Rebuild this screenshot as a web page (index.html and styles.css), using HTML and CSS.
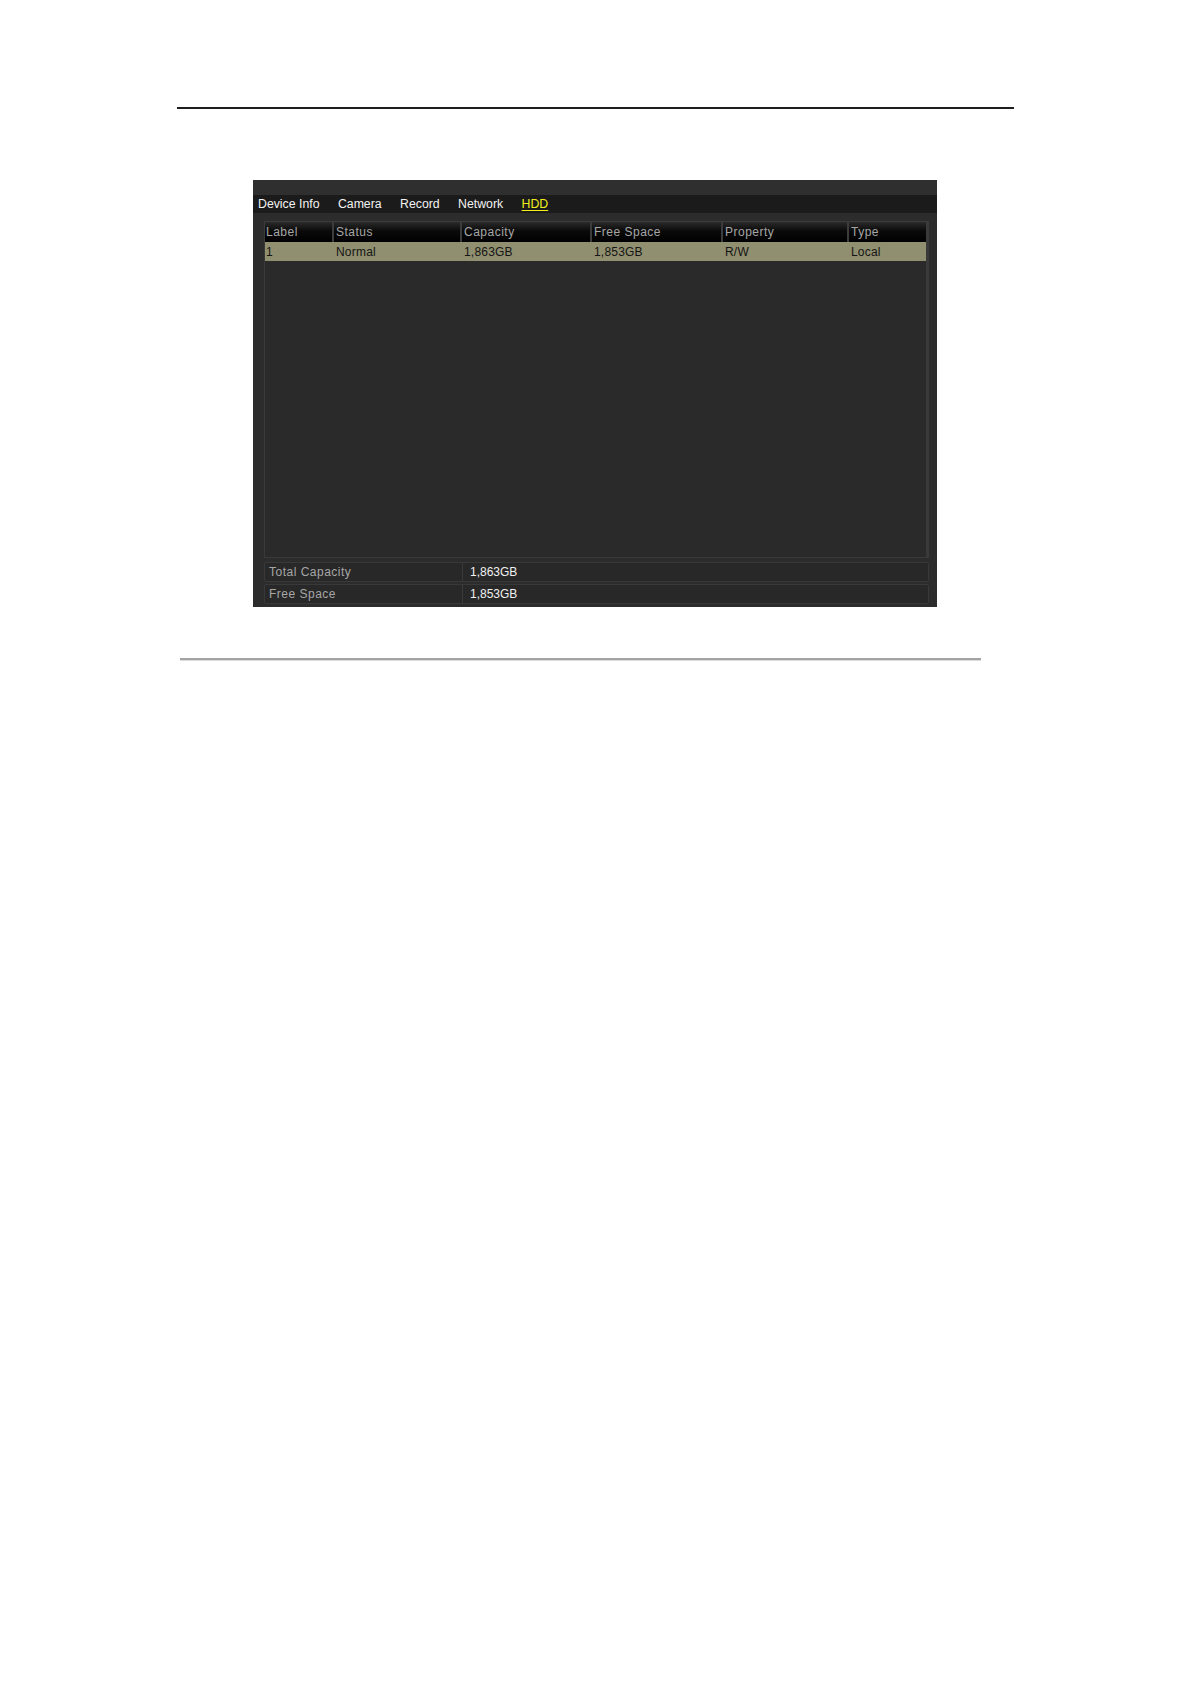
FILE: index.html
```html
<!DOCTYPE html>
<html>
<head>
<meta charset="utf-8">
<link rel="stylesheet" href="styles.css">
</head>
<body>
<div class="page">
  <div class="rule-top"></div>
  <div class="panel">
    <div class="panel-top"></div>
    <div class="tabs">
      <span class="tab">Device Info</span>
      <span class="tab">Camera</span>
      <span class="tab">Record</span>
      <span class="tab">Network</span>
      <span class="tab active">HDD</span>
    </div>
    <div class="table">
      <div class="row head">
        <div class="cell first">Label</div>
        <div class="cell">Status</div>
        <div class="cell">Capacity</div>
        <div class="cell">Free Space</div>
        <div class="cell">Property</div>
        <div class="cell">Type</div>
      </div>
      <div class="row sel">
        <div class="cell first">1</div>
        <div class="cell">Normal</div>
        <div class="cell">1,863GB</div>
        <div class="cell">1,853GB</div>
        <div class="cell">R/W</div>
        <div class="cell">Local</div>
      </div>
    </div>
    <div class="summary">
      <div class="srow">
        <div class="slabel">Total Capacity</div>
        <div class="svalue">1,863GB</div>
      </div>
      <div class="srow">
        <div class="slabel">Free Space</div>
        <div class="svalue">1,853GB</div>
      </div>
    </div>
  </div>
  <div class="rule-bottom"></div>
</div>
</body>
</html>
```
FILE: styles.css
```css
html, body {
  margin: 0;
  padding: 0;
  background: #ffffff;
}
.page {
  padding-top: 107px;
  font-family: "Liberation Sans", Arial, sans-serif;
}
.rule-top {
  margin-left: 177px;
  width: 837px;
  height: 2px;
  background: #1e1e1e;
}
.panel {
  margin-top: 71px;
  margin-left: 253px;
  width: 684px;
  height: 427px;
  background: #2c2c2c;
  box-sizing: border-box;
  display: flex;
  flex-direction: column;
}
.panel-top {
  height: 15px;
  background: #2f2f2f;
}
.tabs {
  height: 18px;
  background: #1b1b1b;
  display: flex;
  align-items: center;
  gap: 18.4px;
  padding-left: 5px;
  font-size: 12.3px;
  color: #f2f2f2;
}
.tab.active {
  color: #f2ee1e;
  text-decoration: underline;
  text-underline-offset: 2px;
}
.table {
  margin: 8px 8px 0 11px;
  height: 337px;
  box-sizing: border-box;
  background: #2a2a2a;
  border: 1px solid #3a3a3a;
  border-right-width: 3px;
  border-top: none;
}
.row {
  display: grid;
  grid-template-columns: 67px 128px 130px 131px 126px 1fr;
  font-size: 12px;
}
.row.head {
  height: 21px;
  color: #a6a6a6;
  letter-spacing: 0.5px;
}
.row.head .cell {
  background: linear-gradient(#2a2a2a, #0a0a0a 45%, #000000);
  border-left: 2px solid #3c3c3c;
  border-top: 1px solid #3c3c3c;
  padding-left: 2px;
}
.row.head .cell.first {
  border-left: none;
  padding-left: 1px;
}
.row.sel {
  height: 19px;
  background: #908f6f;
  color: #151515;
  letter-spacing: 0.2px;
}
.cell {
  display: flex;
  align-items: center;
  padding-left: 4px;
  box-sizing: border-box;
  white-space: nowrap;
}
.cell.first {
  padding-left: 1px;
}
.summary {
  margin: 4px 8px 0 11px;
  display: flex;
  flex-direction: column;
  gap: 2px;
}
.srow {
  height: 20px;
  display: grid;
  grid-template-columns: 198px 1fr;
  background: #282828;
  border: 1px solid #393939;
  border-radius: 2px;
  box-sizing: border-box;
  font-size: 12px;
}
.slabel {
  color: #a6a6a6;
  padding-left: 4px;
  letter-spacing: 0.5px;
  display: flex;
  align-items: center;
  border-right: 1px solid #3a3a3a;
}
.svalue {
  color: #f0f0f0;
  padding-left: 7px;
  display: flex;
  align-items: center;
}
.rule-bottom {
  margin-top: 51px;
  margin-left: 180px;
  width: 801px;
  height: 2px;
  background: #a3a3a3;
  border-bottom: 1px solid #dcdcdc;
}
```
